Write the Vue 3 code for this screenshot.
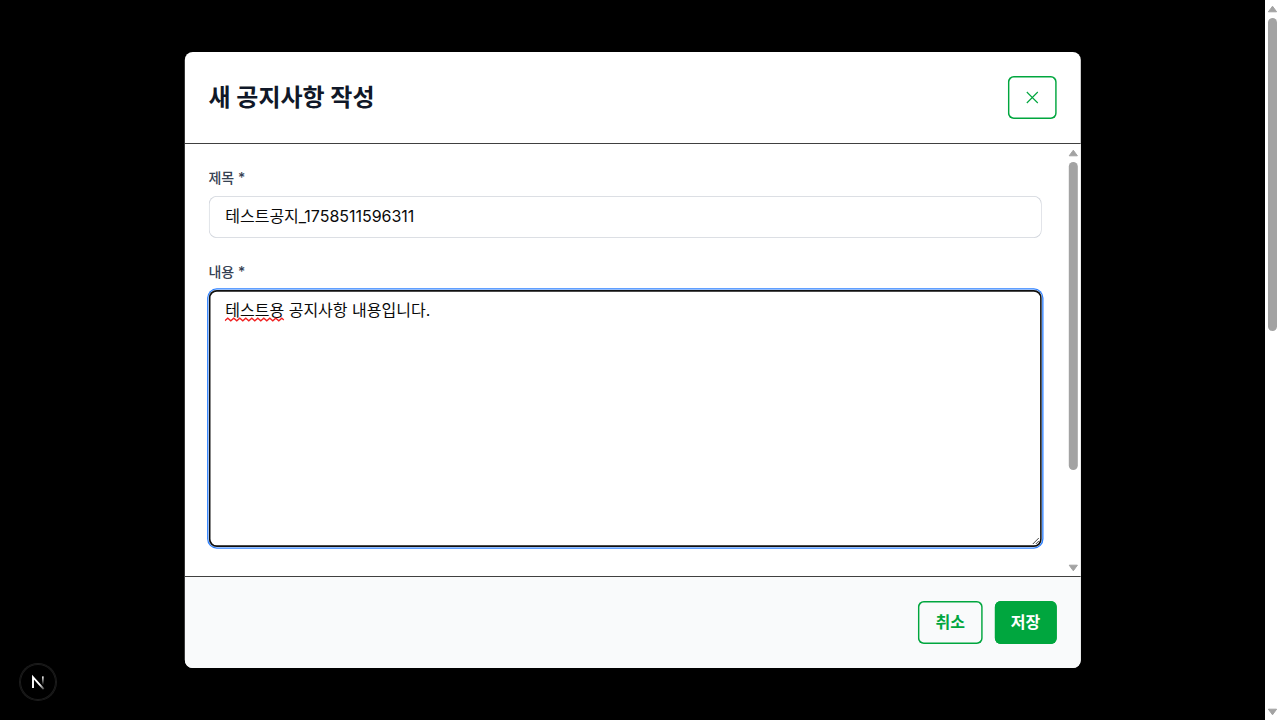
<script setup>
const title = '테스트공지_1758511596311'
</script>

<template>
  <div class="screen">
    <main class="backdrop">
      <section class="modal">
        <header class="head">
          <h2>새 공지사항 작성</h2>
          <button class="btn close" aria-label="닫기">
            <svg width="15" height="15" viewBox="0 0 15 15"><path d="M2 2L13 13M13 2L2 13" /></svg>
          </button>
        </header>
        <div class="body">
          <div class="form">
            <label>제목 *</label>
            <div class="input">{{ title }}</div>
            <label>내용 *</label>
            <div class="area">
              <span class="typo">테스트용<svg class="wave" width="60" height="5" viewBox="0 0 60 5"><path d="M0 3.8L3 1.2L6 3.8L9 1.2L12 3.8L15 1.2L18 3.8L21 1.2L24 3.8L27 1.2L30 3.8L33 1.2L36 3.8L39 1.2L42 3.8L45 1.2L48 3.8L51 1.2L54 3.8L57 1.2L59 3" /></svg></span> 공지사항 내용입니다.
              <svg class="grip" width="9" height="9" viewBox="0 0 9 9"><path d="M1 7L7 1M4 7L7 4" /></svg>
            </div>
          </div>
          <div class="bar inner">
            <svg width="11" height="8" viewBox="0 0 11 8"><path d="M5.5 1.2L9.6 6.8H1.4Z" /></svg>
            <div class="track"><i class="thumb"></i></div>
            <svg width="11" height="8" viewBox="0 0 11 8"><path d="M5.5 6.8L9.6 1.2H1.4Z" /></svg>
          </div>
        </div>
        <footer class="foot">
          <button class="btn cancel">취소</button>
          <button class="btn save">저장</button>
        </footer>
      </section>
      <div class="badge">
        <svg width="36" height="36" viewBox="0 0 36 36">
          <defs>
            <linearGradient id="stem" x1="0" y1="12" x2="0" y2="21" gradientUnits="userSpaceOnUse">
              <stop offset="0" stop-color="#fff" /><stop offset="1" stop-color="#fff" stop-opacity="0" />
            </linearGradient>
            <linearGradient id="diag" x1="20" y1="20" x2="25" y2="26" gradientUnits="userSpaceOnUse">
              <stop offset="0" stop-color="#fff" /><stop offset="1" stop-color="#fff" stop-opacity="0.1" />
            </linearGradient>
          </defs>
          <path d="M13 24V13.2L23.7 25.2" fill="none" stroke="url(#diag)" stroke-width="1.9" />
          <rect x="22" y="12.4" width="1.7" height="8.6" fill="url(#stem)" />
        </svg>
      </div>
    </main>
    <aside class="bar outer">
      <svg width="11" height="8" viewBox="0 0 11 8"><path d="M5.5 1.2L9.6 6.8H1.4Z" /></svg>
      <div class="track"><i class="thumb"></i></div>
      <svg width="11" height="8" viewBox="0 0 11 8"><path d="M5.5 6.8L9.6 1.2H1.4Z" /></svg>
    </aside>
  </div>
</template>

<style>
body {
  background: #000;
  overflow: hidden;
}
</style>

<style scoped>
* {
  box-sizing: border-box;
}
.screen {
  display: flex;
  width: 1280px;
  height: 720px;
  background: #000;
  font-family: Inter, "Noto Sans CJK KR", sans-serif;
  color: #0a0a0a;
}
.backdrop {
  position: relative;
  width: 1265px;
  display: flex;
  align-items: center;
  justify-content: center;
}
.modal {
  width: 896px;
  height: 616px;
  display: flex;
  flex-direction: column;
  background: #fff;
  border-radius: 8px;
  overflow: hidden;
  transform: translateX(-0.2px);
}
.head {
  height: 92px;
  padding: 24px 24px 24px 24.3px;
  border-bottom: 1px solid #404040;
  display: flex;
  align-items: center;
  justify-content: space-between;
}
h2 {
  margin: 0;
  font-size: 24px;
  line-height: 32px;
  font-weight: 700;
  color: #101828;
}
.btn {
  height: 43px;
  padding: 0 0 2px;
  display: flex;
  align-items: center;
  justify-content: center;
  border: 0;
  box-shadow: inset 0 0 0 1.6px #00a63e;
  border-radius: 6px;
  font: 600 16px/24px Inter, "Noto Sans CJK KR", sans-serif;
  color: #00a63e;
  background: transparent;
}
.close {
  width: 49px;
  padding: 0;
}
.close path {
  fill: none;
  stroke: #00a63e;
  stroke-width: 1.1;
}
.body {
  flex: 1;
  display: flex;
  justify-content: space-between;
}
.form {
  width: 857px;
  padding: 23px 0 0 24.2px;
}
label {
  display: block;
  height: 20px;
  margin-bottom: 9px;
  font-size: 14px;
  line-height: 20px;
  font-weight: 500;
  color: #364153;
  transform: translateY(0.5px);
}
.input {
  height: 41.6px;
  margin-bottom: 23.4px;
  padding: 8px 16.8px;
  box-shadow: inset 0 0 0 0.8px #d1d5dc;
  border-radius: 8px;
  font-size: 16px;
  line-height: 24px;
  letter-spacing: -0.02px;
}
.area {
  position: relative;
  height: 257.5px;
  padding: 8px 16.8px;
  border-radius: 8px;
  box-shadow: inset 0 0 0 1.7px #101010, 0 0 0 0.4px #fff, 0 0 0 1.7px #2b7fff;
  font-size: 16px;
  line-height: 24px;
}
.typo {
  position: relative;
}
.wave {
  position: absolute;
  left: 0;
  bottom: -2px;
  fill: none;
  stroke: #f02020;
  stroke-width: 1.3;
}
.grip {
  position: absolute;
  right: 1px;
  bottom: 1px;
  fill: none;
  stroke: #444;
}
.bar {
  width: 15px;
  display: flex;
  flex-direction: column;
  align-items: center;
  background: #fff;
}
.bar svg {
  flex: none;
  fill: #a3a3a3;
  stroke: #a3a3a3;
  stroke-linejoin: round;
}
.inner {
  padding: 5px 0 4px;
}
.outer {
  padding: 5px 0 4px;
}
.track {
  flex: 1;
  padding-top: 5px;
}
.thumb {
  display: block;
  width: 9px;
  border-radius: 5px;
  background: #a3a3a3;
}
.inner .thumb {
  height: 307.5px;
}
.outer .thumb {
  height: 313px;
}
.foot {
  height: 92px;
  padding: 24px;
  border-top: 1px solid #404040;
  background: #f9fafb;
  display: flex;
  justify-content: flex-end;
  gap: 12px;
}
.cancel {
  width: 64.6px;
  padding-left: 0.6px;
}
.save {
  width: 62px;
  padding-left: 0.6px;
  background: #00a63e;
  color: #fff;
}
.badge {
  position: absolute;
  left: 20px;
  top: 664px;
  width: 36px;
  height: 36px;
  border-radius: 50%;
  box-shadow: 0 0 0 1px #1c1c1c, inset 0 0 0 1px #1c1c1c;
}
.badge svg {
  display: block;
}
</style>
